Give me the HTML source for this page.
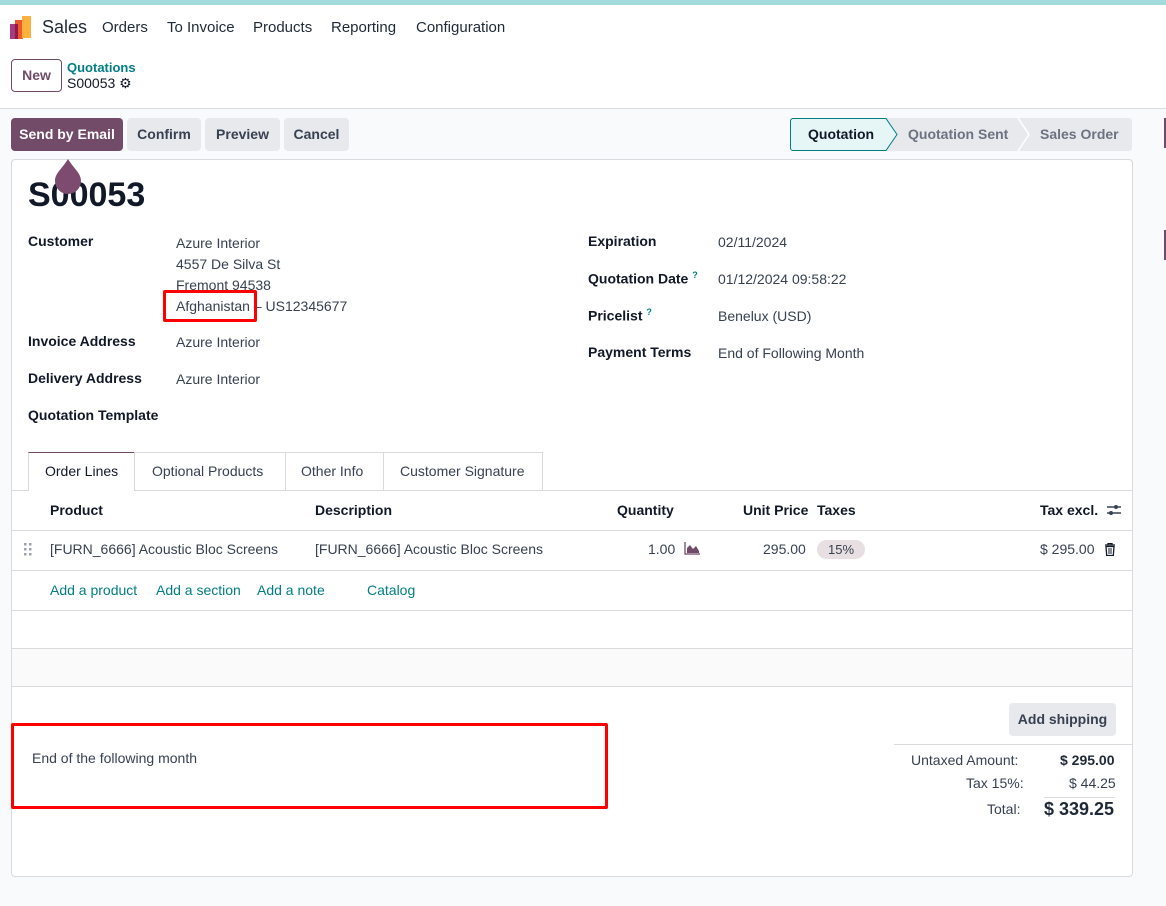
<!DOCTYPE html>
<html><head><meta charset="utf-8"><style>
*{box-sizing:border-box;margin:0;padding:0}
body{width:1166px;height:906px;overflow:hidden;background:#f9fafb;font-family:"Liberation Sans",sans-serif;font-size:14px;color:#374151;position:relative}
.a{position:absolute;white-space:nowrap}
.b{font-weight:bold;color:#111827}
.teal{color:#017e84}
.btn{position:absolute;height:33px;border-radius:4px;background:#e7e9ed;color:#374151;font-weight:bold;line-height:33px;text-align:center;font-size:14px}
.line{position:absolute;left:12px;width:1120px;height:1px;background:#d8dadd}
</style></head><body>
<div class="a" style="left:0;top:0;width:1166px;height:5px;background:#a3dcdb"></div>
<div class="a" style="left:0;top:5px;width:1166px;height:104px;background:#fff;border-bottom:1px solid #d8dadd"></div>
<svg class="a" style="left:10px;top:16px" width="22" height="24" viewBox="0 0 22 24"><rect x="0" y="8" width="8" height="15" fill="#a93b7d"/><rect x="5" y="4" width="8" height="19" fill="#f0582a"/><rect x="12" y="0" width="9" height="22" fill="#fbb13c"/><rect x="5" y="8" width="3" height="15" fill="#8d1c47"/></svg>
<div class="a" style="left:42px;top:17px;font-size:18px;color:#1f2937">Sales</div>
<div class="a" style="left:102px;top:19px;font-size:15px;color:#1f2937">Orders</div>
<div class="a" style="left:167px;top:19px;font-size:15px;color:#1f2937">To Invoice</div>
<div class="a" style="left:253px;top:19px;font-size:15px;color:#1f2937">Products</div>
<div class="a" style="left:331px;top:19px;font-size:15px;color:#1f2937">Reporting</div>
<div class="a" style="left:416px;top:19px;font-size:15px;color:#1f2937">Configuration</div>
<div class="a" style="left:11px;top:59px;width:51px;height:33px;border:1px solid #714b67;border-radius:4px;color:#714b67;font-weight:bold;text-align:center;line-height:31px">New</div>
<div class="a teal" style="left:67px;top:60px;font-weight:bold;font-size:13px">Quotations</div>
<div class="a" style="left:67px;top:75px;font-size:14px;color:#111827">S00053 <span style="font-size:14px">⚙</span></div>
<div class="btn" style="left:11px;top:118px;width:112px;background:#714b67;color:#fff">Send by Email</div>
<div class="btn" style="left:127px;top:118px;width:74px">Confirm</div>
<div class="btn" style="left:205px;top:118px;width:75px">Preview</div>
<div class="btn" style="left:284px;top:118px;width:65px">Cancel</div>
<svg class="a" style="left:790px;top:118px" width="344" height="34"><rect x="0" y="0" width="342" height="33" rx="3" fill="#e7e9ed"/><path d="M3 .5H96L107 16.5L96 32.5H3a2.5 2.5 0 0 1-2.5-2.5V3A2.5 2.5 0 0 1 3 .5z" fill="#e6f6f6" stroke="#017e84"/><path d="M228 0L239 16.5L228 33" fill="none" stroke="#fff" stroke-width="1.5"/></svg>
<div class="a b" style="left:808px;top:126px">Quotation</div>
<div class="a" style="left:908px;top:126px;color:#6b7280;font-weight:bold">Quotation Sent</div>
<div class="a" style="left:1040px;top:126px;color:#6b7280;font-weight:bold">Sales Order</div>
<div class="a" style="left:1164px;top:118px;width:2px;height:30px;background:#714b67"></div>
<div class="a" style="left:1164px;top:230px;width:2px;height:30px;background:#714b67"></div>
<div class="a" style="left:11px;top:159px;width:1122px;height:718px;background:#fff;border:1px solid #d8dadd;border-radius:4px"></div>
<div class="a" style="left:28px;top:176px;font-size:34px;font-weight:600;color:#111827">S00053</div>
<svg class="a" style="left:54px;top:159px" width="28" height="36"><path d="M14 0C20 10 27 14 27 22A13 13 0 0 1 1 22C1 14 8 10 14 0z" fill="#7e4b70"/></svg>
<div class="a b" style="left:28px;top:233px">Customer</div>
<div class="a" style="left:176px;top:233px;line-height:21px">Azure Interior<br>4557 De Silva St<br>Fremont 94538<br>Afghanistan – US12345677</div>
<div class="a" style="left:163px;top:290px;width:94px;height:32px;border:3px solid #f00;border-radius:2px"></div>
<div class="a b" style="left:28px;top:333px">Invoice Address</div>
<div class="a" style="left:176px;top:334px">Azure Interior</div>
<div class="a b" style="left:28px;top:370px">Delivery Address</div>
<div class="a" style="left:176px;top:371px">Azure Interior</div>
<div class="a b" style="left:28px;top:407px">Quotation Template</div>
<div class="a b" style="left:588px;top:233px">Expiration</div>
<div class="a" style="left:718px;top:234px">02/11/2024</div>
<div class="a b" style="left:588px;top:270px">Quotation Date <sup style="color:#017e84;font-size:9px">?</sup></div>
<div class="a" style="left:718px;top:271px">01/12/2024 09:58:22</div>
<div class="a b" style="left:588px;top:307px">Pricelist <sup style="color:#017e84;font-size:9px">?</sup></div>
<div class="a" style="left:718px;top:308px">Benelux (USD)</div>
<div class="a b" style="left:588px;top:344px">Payment Terms</div>
<div class="a" style="left:718px;top:345px">End of Following Month</div>
<div class="line" style="top:490px"></div>
<div class="a" style="left:28px;top:452px;width:107px;height:39px;background:#fff;border:1px solid #d8dadd;border-top:1px solid #714b67;border-bottom:none"></div>
<div class="a" style="left:134px;top:452px;width:409px;height:38px;border:1px solid #d8dadd;border-bottom:none"></div>
<div class="a" style="left:285px;top:452px;width:1px;height:38px;background:#d8dadd"></div>
<div class="a" style="left:383px;top:452px;width:1px;height:38px;background:#d8dadd"></div>
<div class="a" style="left:45px;top:463px;color:#111827">Order Lines</div>
<div class="a" style="left:152px;top:463px">Optional Products</div>
<div class="a" style="left:301px;top:463px">Other Info</div>
<div class="a" style="left:400px;top:463px">Customer Signature</div>
<div class="a b" style="left:50px;top:502px">Product</div>
<div class="a b" style="left:315px;top:502px">Description</div>
<div class="a b" style="left:617px;top:502px">Quantity</div>
<div class="a b" style="left:743px;top:502px">Unit Price</div>
<div class="a b" style="left:817px;top:502px">Taxes</div>
<div class="a b" style="left:1040px;top:502px">Tax excl.</div>
<svg class="a" style="left:1106px;top:503px" width="16" height="14"><path d="M1 4H15M1 10H15" stroke="#374151" stroke-width="1.5"/><circle cx="10" cy="4" r="2" fill="#374151"/><circle cx="5" cy="10" r="2" fill="#374151"/></svg>
<div class="line" style="top:530px"></div>
<svg class="a" style="left:24px;top:543px" width="8" height="13"><g fill="#9ca3af"><rect x="0" y="0" width="2.5" height="2.5"/><rect x="5" y="0" width="2.5" height="2.5"/><rect x="0" y="5" width="2.5" height="2.5"/><rect x="5" y="5" width="2.5" height="2.5"/><rect x="0" y="10" width="2.5" height="2.5"/><rect x="5" y="10" width="2.5" height="2.5"/></g></svg>
<div class="a" style="left:50px;top:541px">[FURN_6666] Acoustic Bloc Screens</div>
<div class="a" style="left:315px;top:541px">[FURN_6666] Acoustic Bloc Screens</div>
<div class="a" style="left:648px;top:541px">1.00</div>
<svg class="a" style="left:684px;top:541px" width="17" height="14"><path d="M1 1V13H16" stroke="#714b67" fill="none" stroke-width="1.3"/><path d="M3 12V7L6 4L9 8L12 5L15 10V12z" fill="#714b67"/></svg>
<div class="a" style="left:763px;top:541px">295.00</div>
<div class="a" style="left:817px;top:540px;width:48px;height:19px;border-radius:10px;background:#e8dfe2;text-align:center;line-height:19px;font-size:13px">15%</div>
<div class="a" style="left:1040px;top:541px">$ 295.00</div>
<svg class="a" style="left:1104px;top:543px" width="12" height="13"><path d="M1 2H11M4 2V0.5H8V2M2 3.5H10L9.3 12.5H2.7z" fill="none" stroke="#111827" stroke-width="1.3"/><path d="M5 5V11M7 5V11" stroke="#111827"/></svg>
<div class="line" style="top:570px"></div>
<div class="a teal" style="left:50px;top:582px">Add a product</div>
<div class="a teal" style="left:156px;top:582px">Add a section</div>
<div class="a teal" style="left:257px;top:582px">Add a note</div>
<div class="a teal" style="left:367px;top:582px">Catalog</div>
<div class="line" style="top:610px"></div>
<div class="a" style="left:12px;top:649px;width:1120px;height:37px;background:#fafafa"></div>
<div class="line" style="top:648px"></div>
<div class="line" style="top:686px"></div>
<div class="btn" style="left:1009px;top:703px;width:107px;height:33px">Add shipping</div>
<div class="a" style="left:894px;top:744px;width:238px;height:1px;background:#d8dadd"></div>
<div class="a" style="left:911px;top:752px">Untaxed Amount:</div>
<div class="a b" style="left:1060px;top:752px;color:#1f2937">$ 295.00</div>
<div class="a" style="left:966px;top:775px">Tax 15%:</div>
<div class="a" style="left:1069px;top:775px">$ 44.25</div>
<div class="a" style="left:1044px;top:797px;width:71px;height:1px;background:#d8dadd"></div>
<div class="a" style="left:987px;top:801px">Total:</div>
<div class="a b" style="left:1044px;top:799px;font-size:18px;color:#1f2937">$ 339.25</div>
<div class="a" style="left:11px;top:723px;width:597px;height:86px;border:3px solid #f00;border-radius:2px"></div>
<div class="a" style="left:32px;top:750px">End of the following month</div>
</body></html>
